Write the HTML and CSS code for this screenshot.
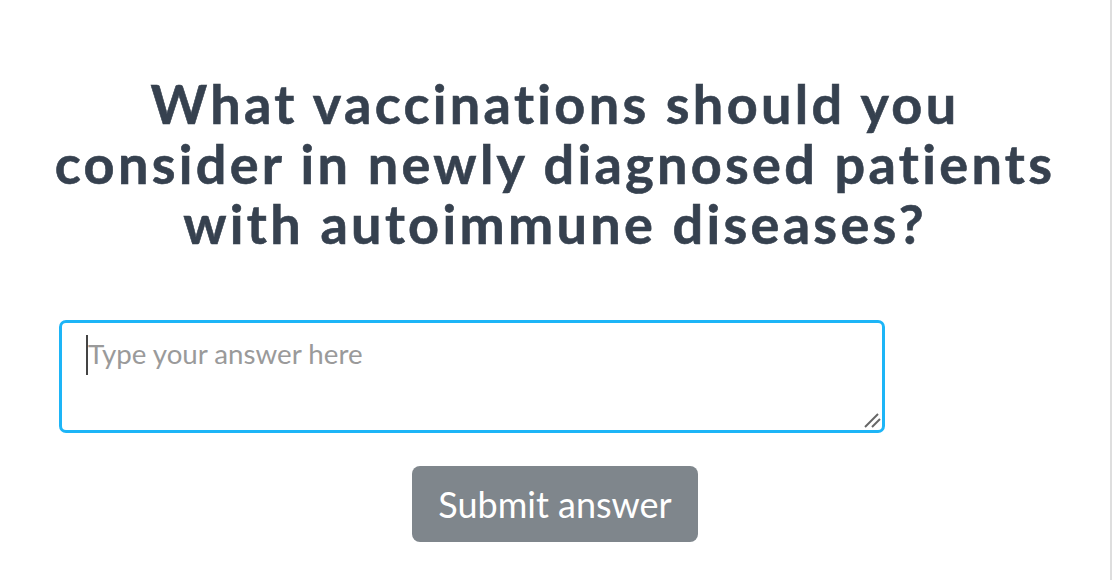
FILE: index.html
```html
<!doctype html>
<html>
<head>
    <meta charset="utf-8">
    <title>Question</title>

    <link rel="stylesheet" href="styles.css">
</head>

<body>
    <div class="question-box">
        <h1 class="question">What vaccinations should you consider in newly diagnosed patients with autoimmune diseases?</h1>

        <form class="answer-form">
            <div class="answer-wrap">
                <textarea class="answer" placeholder="Type your answer here"></textarea>
                <span class="caret"></span>
                <svg class="grip" width="20" height="20" viewBox="0 0 20 20">
                    <line x1="1" y1="15" x2="14" y2="2" stroke="#666" stroke-width="2"/>
                    <line x1="8" y1="15" x2="16" y2="7" stroke="#666" stroke-width="2"/>
                </svg>
            </div>
            <button type="button" class="submit">Submit answer</button>
        </form>
    </div>
</body>
</html>
```
FILE: styles.css
```css
html, body {
    margin: 0;
    padding: 0;
    background: #fff;
}

.question-box {
    width: 1110px;
    height: 580px;
    border-right: 2px solid #dedede;
    font-family: Lato, "Open Sans", sans-serif;
}

.question {
    margin: 0;
    padding: 74px 30px 0;
    font-size: 54px;
    line-height: 60px;
    font-weight: 700;
    letter-spacing: 3.3px;
    -webkit-text-stroke: 0.6px #36414f;
    text-align: center;
    color: #36414f;
}

.answer-form {
    margin-top: 66px;
    display: flex;
    flex-direction: column;
}

.answer-wrap {
    position: relative;
    margin-left: 59px;
    width: 826px;
    height: 113px;
}

.answer {
    display: block;
    width: 100%;
    height: 100%;
    box-sizing: border-box;
    padding: 14px 26px;
    border: 3px solid #1db5f7;
    border-radius: 7px;
    outline: none;
    font-family: Lato, sans-serif;
    font-size: 27.7px;
    color: #333;
    resize: none;
}

.answer::placeholder {
    color: #9a9a9a;
}

.caret {
    position: absolute;
    left: 27px;
    top: 15px;
    width: 2px;
    height: 40px;
    background: #444;
}

.grip {
    position: absolute;
    left: 805px;
    top: 92px;
}

.submit {
    align-self: center;
    margin-top: 33px;
    width: 286px;
    height: 76px;
    border: none;
    border-radius: 8px;
    background: #7f868c;
    color: #fff;
    font-family: Lato, sans-serif;
    font-size: 36px;
}
```
